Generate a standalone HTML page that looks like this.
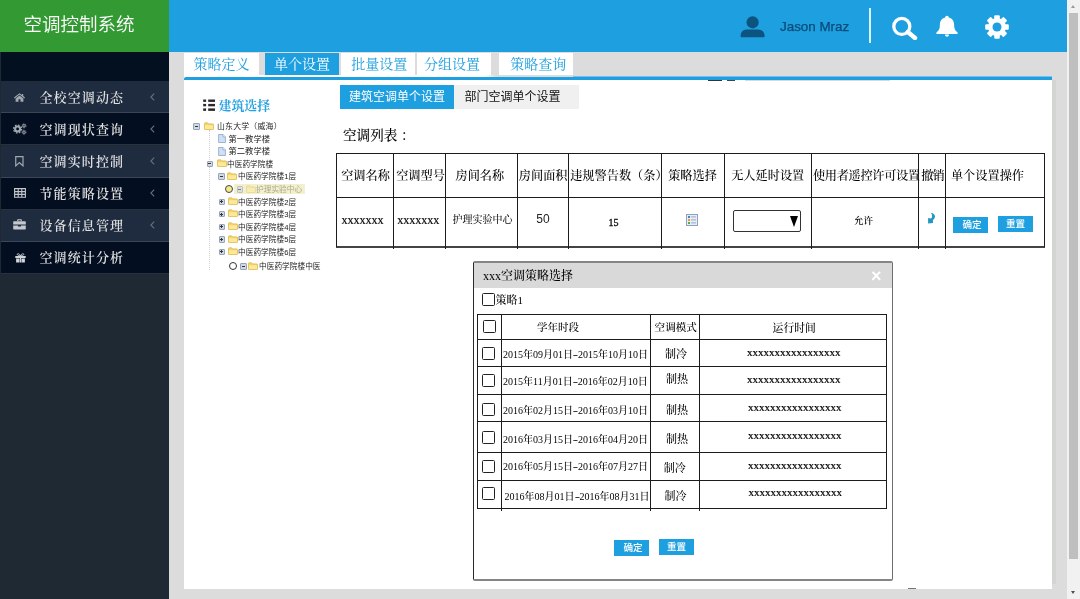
<!DOCTYPE html>
<html lang="zh-CN">
<head>
<meta charset="utf-8">
<title>空调控制系统</title>
<style>
*{box-sizing:border-box;margin:0;padding:0}
html,body{width:1080px;height:599px;overflow:hidden;background:#dcdcdc;}
body{position:relative;font-family:"Liberation Serif","Noto Serif CJK SC",serif;color:#111;will-change:transform}
.abs{position:absolute}
.sans{font-family:"Liberation Sans","Noto Sans CJK SC",sans-serif}
.serif{font-family:"Liberation Serif","Noto Serif CJK SC",serif}
#logo{left:0;top:0;width:169px;height:52px;background:#339933;color:#fff;font-family:"Liberation Sans","Noto Sans CJK SC",sans-serif;font-weight:350;font-size:18.5px;line-height:52px;padding-left:23.6px;white-space:nowrap}
#logo span{position:relative;top:-1px}
#topbar{left:169px;top:0;width:898px;height:52px;background:#1e9fe0}
#side{left:0;top:52px;width:169px;height:547px;background:#1f2933}
#side .band{left:1px;top:0;width:168px;height:29.3px;background:#03101f}
.mi{left:1px;width:168px;height:32.1px;color:#dedede;font-size:13px;letter-spacing:1.1px;line-height:32px;white-space:nowrap;font-weight:600}
.mi.l{background:#1f2c40;border-bottom:1px solid #3a4658}
.mi.d{background:#030f20;border-bottom:1px solid #27313f}
.mi .t{position:absolute;left:38.5px;top:0.5px}
.mi svg{position:absolute}
.mi .ch{position:absolute;left:149px;top:0;color:#7d8794;font-size:11px;font-family:"Liberation Sans",sans-serif}

/* topbar */
#user{left:740.3px;top:15.8px}
#uname{left:780px;top:19px;font-family:"Liberation Sans",sans-serif;font-size:13.4px;color:#0a4b76;white-space:nowrap;line-height:16px;-webkit-text-stroke:0.25px #0a4b76}
#vdiv{top:8px;width:2px;height:35px;background:#d8f4ff}
/* scrollbar */
#sb{left:1067px;top:0;width:13px;height:599px;background:#f1f1f1}
#sb .thumb{left:2px;top:13px;width:9px;height:546.4px;background:#bfbfbf}
#sb .up{left:4px;top:4.8px;width:0;height:0;border-left:2.6px solid transparent;border-right:2.6px solid transparent;border-bottom:3.2px solid #9a9a9a}
#sb .dn{left:4px;top:591px;width:0;height:0;border-left:2.6px solid transparent;border-right:2.6px solid transparent;border-top:3.2px solid #505050}
/* tabs */
.tab{top:53px;height:22px;width:75px;background:#fff;color:#1e9fe0;font-size:14px;line-height:24px;overflow:hidden;text-align:center;white-space:nowrap}
.tab.on{background:#1e9fe0;color:#fff}
#tline{left:184px;top:75px;width:868px;height:5px;background:linear-gradient(to right,#fff 0,#fff 300px,rgba(255,255,255,0) 312px)}
#tline i{position:absolute;left:0;top:2px;width:868px;height:3px;background:#1e9fe0;border-radius:2px 0 0 0}#tline b{position:absolute;left:389px;top:1px;width:479px;height:1px;background:#7cbfe4}
#panel{left:184px;top:80px;width:868px;height:509px;background:#fff;border-right:0}
#pshadow{left:1052px;top:80px;width:4px;height:504px;background:#d3d5d3}
.stab{top:85px;height:24px;font-family:"Liberation Sans","Noto Sans CJK SC",sans-serif;font-size:12px;line-height:25px;text-align:center;white-space:nowrap}

/* tree */
#bsel{left:218.5px;top:98px;font-family:"Liberation Serif","Noto Serif CJK SC",serif;font-weight:700;font-size:12.9px;line-height:16px;color:#2aa2e2;white-space:nowrap}
.tr{font-family:"Liberation Sans","Noto Sans CJK SC",sans-serif;font-size:7.7px;line-height:13px;color:#222;white-space:nowrap;height:12px}
.ex{width:6.5px;height:6.5px;border:1px solid #97a4b5;background:#cfd8e3;border-radius:1px}
.ex:before{content:"";position:absolute;left:0.75px;top:1.75px;width:3px;height:1px;background:#334}
.ex.p:after{content:"";position:absolute;left:1.75px;top:0.75px;width:1px;height:3px;background:#334}
.fo{width:10px;height:8px}
.fi{width:8px;height:9px}
.rad{width:8px;height:8px;border:1px solid #333;border-radius:50%;background:#fff}
/* main table */
#ttl{left:343px;top:127px;font-size:13.6px;line-height:18px;white-space:nowrap;color:#000;font-weight:500}
.hl{background:#1c1c1c;height:1px}
.vl{background:#1c1c1c;width:1px}
.th{top:154px;height:43px;line-height:45px;font-size:12.2px;text-align:center;white-space:nowrap;color:#000;font-weight:500}
.td{top:198px;height:44px;line-height:42px;text-align:center;white-space:nowrap;color:#111}
.btn{background:#1e9fe0;color:#fff;font-family:"Liberation Sans","Noto Sans CJK SC",sans-serif;font-weight:500;font-size:9.6px;text-align:center;white-space:nowrap;line-height:16px;height:16px}
/* dialog */
#dlg{left:473px;top:261px;width:420px;height:320px;background:#fff;border-left:1px solid #2a2a2a;border-top:2px solid #858585;border-right:1px solid #6e6e6e;border-bottom:2px solid #858585;border-radius:2px}
#dlgt{left:474px;top:263px;width:418px;height:25px;background:#d9d9d9}
.cb{width:13px;height:13px;border:1px solid #222;border-radius:1.5px;background:#fff}
.dt{font-size:10px;line-height:14px;white-space:nowrap;color:#000;font-weight:500}
</style>
</head>
<body>
<div id="logo" class="abs"><span>空调控制系统</span></div>
<div id="topbar" class="abs"></div>
<div id="side" class="abs">
  <div class="band abs"></div>
  <div class="mi l abs" style="top:29.3px"><svg style="left:13px;top:11.5px" width="11" height="9" viewBox="0 0 11 9"><path d="M5.5 0.2 L0 4.6 L0.7 5.4 L5.5 1.6 L10.3 5.4 L11 4.6 L9.2 3.1 V0.9 H8 V2.1 Z M5.5 2.4 L1.6 5.5 V8.8 H4.5 V6.3 H6.5 V8.8 H9.4 V5.5 Z" fill="#a2a8b0"/></svg><span class="t">全校空调动态</span><svg class="chv" style="left:149.3px;top:11.7px" width="5" height="8" viewBox="0 0 5 8"><path d="M4.2 0.6 L0.9 4 L4.2 7.4" fill="none" stroke="#66717f" stroke-width="1.1"/></svg></div>
  <div class="mi d abs" style="top:61.4px"><svg style="left:12px;top:9.7px" width="14" height="12" viewBox="0 0 14 12"><g fill="none" stroke="#a2a8b0"><circle cx="4.6" cy="6" r="2.5" stroke-width="2.1"/><circle cx="4.6" cy="6" r="4" stroke-width="1.3" stroke-dasharray="1.6 1.54"/><circle cx="11" cy="2.8" r="1.2" stroke-width="1"/><circle cx="11" cy="2.8" r="2" stroke-width="0.9" stroke-dasharray="0.9 0.67"/><circle cx="11" cy="9.2" r="1.2" stroke-width="1"/><circle cx="11" cy="9.2" r="2" stroke-width="0.9" stroke-dasharray="0.9 0.67"/></g></svg><span class="t">空调现状查询</span><svg class="chv" style="left:149.3px;top:11.7px" width="5" height="8" viewBox="0 0 5 8"><path d="M4.2 0.6 L0.9 4 L4.2 7.4" fill="none" stroke="#66717f" stroke-width="1.1"/></svg></div>
  <div class="mi l abs" style="top:93.5px"><svg style="left:14px;top:10.5px" width="9.2" height="11" viewBox="0 0 10 12"><path d="M0.8 0.7 H8.7 V10.8 L4.75 7.2 L0.8 10.8 Z" fill="none" stroke="#a2a8b0" stroke-width="1.3"/></svg><span class="t">空调实时控制</span><svg class="chv" style="left:149.3px;top:11.7px" width="5" height="8" viewBox="0 0 5 8"><path d="M4.2 0.6 L0.9 4 L4.2 7.4" fill="none" stroke="#66717f" stroke-width="1.1"/></svg></div>
  <div class="mi d abs" style="top:125.6px"><svg style="left:12.5px;top:10.7px" width="12" height="10" viewBox="0 0 12 10"><path d="M0.6 0.6 H11.4 V9.2 H0.6 Z M0.6 3.6 H11.4 M0.6 6.4 H11.4 M4.2 0.6 V9.2 M7.8 0.6 V9.2" fill="none" stroke="#c4c7cc" stroke-width="1.1"/></svg><span class="t">节能策略设置</span><svg class="chv" style="left:149.3px;top:11.7px" width="5" height="8" viewBox="0 0 5 8"><path d="M4.2 0.6 L0.9 4 L4.2 7.4" fill="none" stroke="#66717f" stroke-width="1.1"/></svg></div>
  <div class="mi l abs" style="top:157.7px"><svg style="left:12px;top:9.5px" width="13" height="11" viewBox="0 0 13 11"><path d="M4.2 2.2 V0.9 Q4.2 0.3 4.8 0.3 H8.2 Q8.8 0.3 8.8 0.9 V2.2 H7.7 V1.3 H5.3 V2.2 Z" fill="#c4c7cc"/><path d="M0.2 2.9 Q0.2 2.2 0.9 2.2 H12.1 Q12.8 2.2 12.8 2.9 V5.6 H0.2 Z M0.2 6.4 H5 V7.4 H8 V6.4 H12.8 V9.8 Q12.8 10.5 12.1 10.5 H0.9 Q0.2 10.5 0.2 9.8 Z" fill="#c4c7cc"/></svg><span class="t">设备信息管理</span><svg class="chv" style="left:149.3px;top:11.7px" width="5" height="8" viewBox="0 0 5 8"><path d="M4.2 0.6 L0.9 4 L4.2 7.4" fill="none" stroke="#66717f" stroke-width="1.1"/></svg></div>
  <div class="mi d abs" style="top:189.8px"><svg style="left:13.5px;top:11px" width="11" height="10" viewBox="0 0 11 10"><path d="M0.3 2.9 H10.7 V5 H0.3 Z M1.1 5.6 H4.6 V9.6 H1.1 Z M6.4 5.6 H9.9 V9.6 H6.4 Z M5 2.9 H6 V9.6 H5 Z" fill="#d0d3d7"/><path d="M5.5 2.6 C4 0 1.6 0.4 2.4 1.8 C2.8 2.5 4 2.7 5.5 2.6 C7 2.7 8.2 2.5 8.6 1.8 C9.4 0.4 7 0 5.5 2.6 Z" fill="none" stroke="#d0d3d7" stroke-width="0.9"/></svg><span class="t">空调统计分析</span></div>
</div>

<!-- top bar contents -->
<svg id="user" class="abs" width="25" height="22" viewBox="0 0 25 22"><circle cx="12.6" cy="6.3" r="6.1" fill="#0b5480"/><path d="M0.6 20.3 C0.6 15.2 3.6 13.4 7.6 13.4 H17.6 C21.6 13.4 24.6 15.2 24.6 20.3 C24.6 21 24.2 21.3 23.6 21.3 H1.6 C1 21.3 0.6 21 0.6 20.3 Z" fill="#0b5480"/></svg>
<div id="uname" class="abs">Jason Mraz</div>
<div id="vdiv" class="abs" style="left:869px"></div>
<svg class="abs" style="left:891px;top:15.6px" width="27" height="24" viewBox="0 0 27 24"><circle cx="10.8" cy="10.4" r="8" fill="none" stroke="#fff" stroke-width="3.3"/><path d="M16.8 16 L24 22" stroke="#fff" stroke-width="4.4" stroke-linecap="round"/></svg>
<svg class="abs" style="left:935px;top:15px" width="24" height="23" viewBox="0 0 24 23"><path d="M12 0.8 C10.9 0.8 10.3 1.6 10.3 2.5 C6.4 3.4 4.9 6.4 4.9 9.8 C4.9 13.8 3.9 15.6 1.4 17.4 V19 H22.6 V17.4 C20.1 15.6 19.1 13.8 19.1 9.8 C19.1 6.4 17.6 3.4 13.7 2.5 C13.7 1.6 13.1 0.8 12 0.8 Z" fill="#fff"/><path d="M10 19.6 H14 C14 20.9 13.2 21.8 12 21.8 C10.8 21.8 10 20.9 10 19.6 Z" fill="#fff"/></svg>
<svg class="abs" style="left:985px;top:14.5px" width="24" height="24" viewBox="-12.5 -12.5 25 25"><g fill="#fff"><circle r="9.3"/><g id="tth"><rect x="-2.9" y="-12.3" width="5.8" height="5" rx="1.2"/></g><use href="#tth" transform="rotate(45)"/><use href="#tth" transform="rotate(90)"/><use href="#tth" transform="rotate(135)"/><use href="#tth" transform="rotate(180)"/><use href="#tth" transform="rotate(225)"/><use href="#tth" transform="rotate(270)"/><use href="#tth" transform="rotate(315)"/></g><circle r="4.7" fill="#1e9fe0"/></svg>
<!-- scrollbar -->
<div id="sb" class="abs"><div class="thumb abs"></div><div class="up abs"></div><div class="dn abs"></div></div>
<!-- tabs -->
<div class="tab abs" style="left:184px">策略定义</div>
<div class="tab on abs" style="left:265px;width:74px">单个设置</div>
<div class="tab abs" style="left:341px;width:74px;padding-left:2.6px">批量设置</div>
<div class="tab abs" style="left:417px;width:74px;padding-right:4px">分组设置</div>
<div class="tab abs" style="left:499px;width:74px;padding-left:4.5px">策略查询</div>
<div id="tline" class="abs"><b></b><i></i></div>
<div id="panel" class="abs"></div>
<div id="pshadow" class="abs"></div>
<div class="abs" style="left:708px;top:80px;width:14px;height:1px;background:#333"></div><div class="abs" style="left:727px;top:80px;width:8px;height:1px;background:#444"></div><div class="abs" style="left:745px;top:80px;width:145px;height:1px;background:#d9d9d9"></div><div class="abs" style="left:908px;top:588px;width:8px;height:1px;background:#777"></div>
<div class="stab abs" style="left:340px;width:114px;background:#1e9fe0;color:#fff">建筑空调单个设置</div>
<div class="stab abs" style="left:454px;width:125px;background:#f0f0f0;color:#111;text-align:left;padding-left:10.5px">部门空调单个设置</div>
<svg class="abs" style="left:203px;top:99px" width="13" height="13" viewBox="0 0 13 13"><g fill="#2b2b2b"><rect x="0.2" y="0.5" width="2.9" height="2.4"/><rect x="5.2" y="0.5" width="6.8" height="2.4"/><rect x="0.2" y="4.9" width="2.9" height="2.4"/><rect x="5.2" y="4.9" width="6.8" height="2.4"/><rect x="0.2" y="9.4" width="2.9" height="2.5"/><rect x="5.2" y="9.4" width="6.8" height="2.5"/></g></svg>
<div id="bsel" class="abs">建筑选择</div>
<svg width="0" height="0" style="position:absolute"><defs>
<g id="fold"><path d="M0.5 1.6 Q0.5 0.8 1.3 0.8 H3.6 L4.6 1.9 H8.8 Q9.5 1.9 9.5 2.6 V7 Q9.5 7.6 8.8 7.6 H1.2 Q0.5 7.6 0.5 7 Z" fill="#f3d568" stroke="#d9b13c" stroke-width="0.7"/><path d="M0.9 3.2 H9.1 V7 H0.9 Z" fill="#fbe89a"/></g>
<g id="file"><path d="M0.6 0.5 H5 L7.4 2.9 V8.5 H0.6 Z" fill="#cfe0f4" stroke="#8aa6c8" stroke-width="0.8"/><path d="M5 0.5 V2.9 H7.4" fill="#fff" stroke="#7f9fc6" stroke-width="0.7"/></g>
</defs></svg>
<div class="abs" style="left:209px;top:130px;width:0;height:140px;border-left:1px dotted #d2d2d2"></div>
<div class="abs ex" style="left:193px;top:123px;opacity:1"></div>
<svg class="abs fo" style="left:204px;top:121.5px;opacity:1" viewBox="0 0 10 8"><use href="#fold"/></svg>
<div class="abs tr" style="left:217px;top:120px;font-size:7.9px;letter-spacing:0.2px">山东大学（威海）</div>
<svg class="abs fi" style="left:217.5px;top:134.0px" viewBox="0 0 8 9"><use href="#file"/></svg>
<div class="abs tr" style="left:228.5px;top:132.5px;font-size:8.3px">第一教学楼</div>
<svg class="abs fi" style="left:217.5px;top:146.5px" viewBox="0 0 8 9"><use href="#file"/></svg>
<div class="abs tr" style="left:228.5px;top:145px;font-size:8.3px">第二教学楼</div>
<div class="abs ex" style="left:206.5px;top:160.5px;opacity:1"></div>
<svg class="abs fo" style="left:216.5px;top:159.0px;opacity:1" viewBox="0 0 10 8"><use href="#fold"/></svg>
<div class="abs tr" style="left:227px;top:157.5px">中医药学院楼</div>
<div class="abs ex" style="left:218px;top:173px;opacity:1"></div>
<svg class="abs fo" style="left:227px;top:171.5px;opacity:1" viewBox="0 0 10 8"><use href="#fold"/></svg>
<div class="abs tr" style="left:238px;top:170px">中医药学院楼1层</div>
<div class="abs" style="left:234px;top:184px;width:71px;height:10px;background:#f3f0cf"></div>
<div class="abs rad" style="left:225px;top:185px;border-color:#4a4444;background:#f3ec8c"></div>
<div class="abs ex" style="left:236.5px;top:186px;opacity:0.6"></div>
<svg class="abs fo" style="left:246px;top:184.5px;opacity:0.45" viewBox="0 0 10 8"><use href="#fold"/></svg>
<div class="abs tr" style="left:256px;top:183px;color:#a9a98c">护理实验中心</div>
<div class="abs ex p" style="left:218.5px;top:198.5px;opacity:1"></div>
<svg class="abs fo" style="left:227.5px;top:197.0px;opacity:1" viewBox="0 0 10 8"><use href="#fold"/></svg>
<div class="abs tr" style="left:238px;top:195.5px">中医药学院楼2层</div>
<div class="abs ex p" style="left:218.5px;top:210.8px;opacity:1"></div>
<svg class="abs fo" style="left:227.5px;top:209.3px;opacity:1" viewBox="0 0 10 8"><use href="#fold"/></svg>
<div class="abs tr" style="left:238px;top:207.8px">中医药学院楼3层</div>
<div class="abs ex p" style="left:218.5px;top:223.5px;opacity:1"></div>
<svg class="abs fo" style="left:227.5px;top:222.0px;opacity:1" viewBox="0 0 10 8"><use href="#fold"/></svg>
<div class="abs tr" style="left:238px;top:220.5px">中医药学院楼4层</div>
<div class="abs ex p" style="left:218.5px;top:236.3px;opacity:1"></div>
<svg class="abs fo" style="left:227.5px;top:234.8px;opacity:1" viewBox="0 0 10 8"><use href="#fold"/></svg>
<div class="abs tr" style="left:238px;top:233.3px">中医药学院楼5层</div>
<div class="abs ex p" style="left:218.5px;top:248.7px;opacity:1"></div>
<svg class="abs fo" style="left:227.5px;top:247.2px;opacity:1" viewBox="0 0 10 8"><use href="#fold"/></svg>
<div class="abs tr" style="left:238px;top:245.7px">中医药学院楼6层</div>
<div class="abs rad" style="left:228.5px;top:262px"></div>
<div class="abs ex" style="left:240px;top:263px;opacity:1"></div>
<svg class="abs fo" style="left:248px;top:261.5px;opacity:1" viewBox="0 0 10 8"><use href="#fold"/></svg>
<div class="abs tr" style="left:259px;top:260px">中医药学院楼中医</div>
<div id="ttl" class="abs">空调列表<span style="margin-left:3.5px">：</span></div>
<div class="abs hl" style="left:336px;top:153px;width:709px"></div>
<div class="abs hl" style="left:336px;top:197px;width:709px"></div>
<div class="abs hl" style="left:336px;top:246px;width:709px;background:#444;height:1.5px"></div>
<div class="abs vl" style="left:336px;top:153px;height:94px"></div>
<div class="abs vl" style="left:393px;top:153px;height:96px"></div>
<div class="abs vl" style="left:445px;top:153px;height:96px"></div>
<div class="abs vl" style="left:517px;top:153px;height:96px"></div>
<div class="abs vl" style="left:568px;top:153px;height:96px"></div>
<div class="abs vl" style="left:661px;top:153px;height:96px"></div>
<div class="abs vl" style="left:724px;top:153px;height:96px"></div>
<div class="abs vl" style="left:811px;top:153px;height:96px"></div>
<div class="abs vl" style="left:918px;top:153px;height:96px"></div>
<div class="abs vl" style="left:945px;top:153px;height:96px"></div>
<div class="abs vl" style="left:1044px;top:153px;height:94px"></div>
<div class="abs th" style="left:341.2px;text-align:left;">空调名称</div>
<div class="abs th" style="left:396.2px;text-align:left;">空调型号</div>
<div class="abs th" style="left:455.5px;text-align:left;">房间名称</div>
<div class="abs th" style="left:518.8px;text-align:left;">房间面积</div>
<div class="abs th" style="left:570.2px;text-align:left;">违规警告数（条）</div>
<div class="abs th" style="left:668.2px;text-align:left;">策略选择</div>
<div class="abs th" style="left:731.2px;text-align:left;">无人延时设置</div>
<div class="abs th" style="left:812.9px;text-align:left;letter-spacing:-0.3px;">使用者遥控许可设置</div>
<div class="abs th" style="left:921.3px;text-align:left;letter-spacing:-1px;">撤销</div>
<div class="abs th" style="left:950.9px;text-align:left;">单个设置操作</div>
<div class="abs td" style="left:337px;width:56px;font-size:12px;text-align:left;padding-left:4.5px;line-height:44px;-webkit-text-stroke:0.2px #000">xxxxxxx</div>
<div class="abs td" style="left:394px;width:51px;font-size:12px;text-align:left;padding-left:3.3px;line-height:44px;-webkit-text-stroke:0.2px #000">xxxxxxx</div>
<div class="abs td" style="left:447px;width:71px;font-size:10px;font-weight:500;line-height:44px">护理实验中心</div>
<div class="abs td" style="left:518px;width:50px;font-size:12px;font-family:'Liberation Sans',sans-serif;line-height:43px;color:#222">50</div>
<div class="abs td" style="left:569px;width:89px;font-size:10px;line-height:49px;-webkit-text-stroke:0.3px #000">15</div>
<div class="abs td" style="left:811px;width:105px;font-size:9.5px;font-weight:600;line-height:47px">允许</div>
<svg class="abs" style="left:686px;top:214px" width="12" height="12" viewBox="0 0 12 12"><rect x="0.5" y="0.5" width="11" height="11" fill="#e8eef7" stroke="#8fa3bd"/><rect x="2" y="2" width="2" height="2" fill="#4a7bc8"/><rect x="2" y="5" width="2" height="2" fill="#e0a030"/><rect x="2" y="8" width="2" height="2" fill="#58a858"/><rect x="5" y="2.4" width="5" height="1" fill="#9ab"/><rect x="5" y="5.4" width="5" height="1" fill="#9ab"/><rect x="5" y="8.4" width="5" height="1" fill="#9ab"/></svg>
<div class="abs" style="left:733px;top:210px;width:67.5px;height:22px;border:1px solid #333;border-radius:2px;background:#fff"></div>
<div class="abs" style="left:790px;top:216px;width:0;height:0;border-left:4.7px solid transparent;border-right:4.7px solid transparent;border-top:11px solid #000"></div>
<svg class="abs" style="left:927px;top:212px" width="10" height="13" viewBox="0 0 10 13"><path d="M4 0.9 C6.5 1 8.2 2.8 8 4.6 C7.9 6.2 7.2 7.2 5.9 8.2 L6 10.9 L1.1 11.5 L1.1 6.1 L3.9 6.6 C5.4 5.6 5.6 3 4 0.9 Z" fill="#2496c2"/></svg>
<div class="abs btn" style="left:953px;top:217px;width:35px;padding-left:3px">确定</div>
<div class="abs btn" style="left:998px;top:216px;width:35px">重置</div>
<div id="dlg" class="abs"></div><div id="dlgt" class="abs"></div>
<div class="abs" style="left:483px;top:266.5px;font-size:12px;line-height:18px;white-space:nowrap;color:#000;font-weight:500">xxx空调策略选择</div>
<div class="abs sans" style="left:871px;top:266.5px;font-size:18px;line-height:18px;color:#fff;font-weight:700">×</div>
<div class="abs cb" style="left:482px;top:293px"></div>
<div class="abs dt" style="left:495.5px;top:293px;font-size:11px">策略1</div>
<div class="abs hl" style="left:477px;top:314px;width:410px"></div>
<div class="abs hl" style="left:477px;top:339px;width:410px"></div>
<div class="abs hl" style="left:477px;top:366px;width:410px"></div>
<div class="abs hl" style="left:477px;top:394px;width:410px"></div>
<div class="abs hl" style="left:477px;top:421px;width:410px"></div>
<div class="abs hl" style="left:477px;top:452px;width:410px"></div>
<div class="abs hl" style="left:477px;top:480px;width:410px"></div>
<div class="abs hl" style="left:477px;top:508px;width:410px"></div>
<div class="abs vl" style="left:477px;top:314px;height:195px"></div>
<div class="abs vl" style="left:501px;top:314px;height:197px"></div>
<div class="abs vl" style="left:650px;top:314px;height:197px"></div>
<div class="abs vl" style="left:699px;top:314px;height:197px"></div>
<div class="abs vl" style="left:886px;top:314px;height:195px"></div>
<div class="abs dt" style="left:537px;top:321px;font-size:10.5px">学年时段</div>
<div class="abs dt" style="left:654.6px;top:321px;font-size:10.6px">空调模式</div>
<div class="abs dt" style="left:772.6px;top:321px;font-size:10.8px">运行时间</div>
<div class="abs cb" style="left:483px;top:320px"></div>
<div class="abs cb" style="left:482px;top:347px"></div>
<div class="abs dt" style="left:503px;top:348.25px;font-size:10px">2015年09月01日<span style="display:inline-block;width:5px;text-align:center;transform:scaleX(1.6)">-</span>2015年10月10日</div>
<div class="abs dt" style="left:665px;top:347.25px;font-size:11px">制冷</div>
<div class="abs dt" style="left:747.0px;top:345.10px;font-size:11px;-webkit-text-stroke:0.2px #000">xxxxxxxxxxxxxxxxx</div>
<div class="abs cb" style="left:482px;top:373.75px"></div>
<div class="abs dt" style="left:503px;top:374.50px;font-size:10px">2015年11月01日<span style="display:inline-block;width:5px;text-align:center;transform:scaleX(1.6)">-</span>2016年02月10日</div>
<div class="abs dt" style="left:666px;top:371.75px;font-size:11px">制热</div>
<div class="abs dt" style="left:747.0px;top:371.50px;font-size:11px;-webkit-text-stroke:0.2px #000">xxxxxxxxxxxxxxxxx</div>
<div class="abs cb" style="left:482px;top:402.5px"></div>
<div class="abs dt" style="left:503px;top:404.00px;font-size:10px">2016年02月15日<span style="display:inline-block;width:5px;text-align:center;transform:scaleX(1.6)">-</span>2016年03月10日</div>
<div class="abs dt" style="left:666px;top:403.00px;font-size:11px">制热</div>
<div class="abs dt" style="left:747.9px;top:399.50px;font-size:11px;-webkit-text-stroke:0.2px #000">xxxxxxxxxxxxxxxxx</div>
<div class="abs cb" style="left:482px;top:431px"></div>
<div class="abs dt" style="left:503px;top:432.50px;font-size:10px">2016年03月15日<span style="display:inline-block;width:5px;text-align:center;transform:scaleX(1.6)">-</span>2016年04月20日</div>
<div class="abs dt" style="left:666px;top:431.50px;font-size:11px">制热</div>
<div class="abs dt" style="left:747.9px;top:428.00px;font-size:11px;-webkit-text-stroke:0.2px #000">xxxxxxxxxxxxxxxxx</div>
<div class="abs cb" style="left:482px;top:460px"></div>
<div class="abs dt" style="left:503px;top:460.25px;font-size:10px">2016年05月15日<span style="display:inline-block;width:5px;text-align:center;transform:scaleX(1.6)">-</span>2016年07月27日</div>
<div class="abs dt" style="left:663.75px;top:461.00px;font-size:11px">制冷</div>
<div class="abs dt" style="left:747.9px;top:458.00px;font-size:11px;-webkit-text-stroke:0.2px #000">xxxxxxxxxxxxxxxxx</div>
<div class="abs cb" style="left:482px;top:487px"></div>
<div class="abs dt" style="left:504.5px;top:490.00px;font-size:10px">2016年08月01日<span style="display:inline-block;width:5px;text-align:center;transform:scaleX(1.6)">-</span>2016年08月31日</div>
<div class="abs dt" style="left:664.5px;top:488.50px;font-size:11px">制冷</div>
<div class="abs dt" style="left:748.5px;top:484.80px;font-size:11px;-webkit-text-stroke:0.2px #000">xxxxxxxxxxxxxxxxx</div>
<div class="abs btn" style="left:614px;top:540px;width:35px;padding-left:3px">确定</div>
<div class="abs btn" style="left:659px;top:539px;width:35px">重置</div>
</body>
</html>
